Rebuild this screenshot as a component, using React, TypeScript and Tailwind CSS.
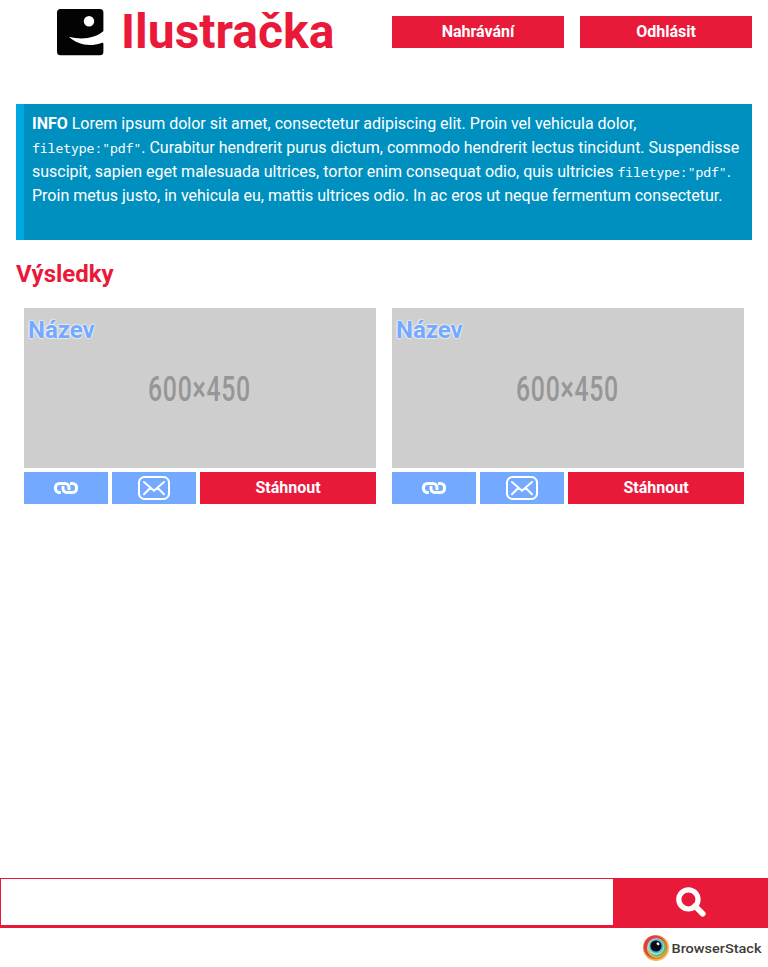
import React from "react";

function Logo() {
  return (
    <svg className="h-12 w-12" viewBox="0 0 48 48">
      <rect x="1" y="1" width="46.4" height="46.2" rx="3.5" fill="#020302" />
      <circle cx="33" cy="13.3" r="5.2" fill="#fff" />
      <path d="M13 28.8 C26 32 39 30.5 48 22.8 V36 C47.6 34.8 46.5 34.6 45 35.2 C33 39 21 36.5 13 28.8Z" fill="#fff" />
    </svg>
  );
}

function LinkIcon() {
  return (
    <svg className="h-3 w-6" viewBox="0 0 24 12" fill="none" stroke="#fff" strokeWidth="3">
      <path d="M6.8 10.5 H5.5 A4 4 0 0 1 1.5 6.5 V5.5 A4 4 0 0 1 5.5 1.5 H11 A4 4 0 0 1 15 5.5 V8" />
      <path d="M16 1.5 H18.5 A4 4 0 0 1 22.5 5.5 V6.5 A4 4 0 0 1 18.5 10.5 H13 A4 4 0 0 1 9 6.5 V4" />
    </svg>
  );
}

function MailIcon() {
  return (
    <svg className="h-6 w-8" viewBox="0 0 32 24" fill="none" stroke="#fff" strokeWidth="2" strokeLinecap="round" strokeLinejoin="round">
      <rect x="1" y="1" width="30" height="22" rx="5.5" />
      <path d="M6 6 L16 14.8 L26 6 M6 18.3 L12.2 12 M26 18.3 L19.8 12" />
    </svg>
  );
}

function SearchIcon() {
  return (
    <svg className="h-[30px] w-[30px]" viewBox="0 0 30 30" fill="none" stroke="#fff">
      <circle cx="12.4" cy="12.4" r="9.6" strokeWidth="5.2" />
      <path d="M19 19 L26.7 26.7" strokeWidth="5.8" strokeLinecap="round" />
    </svg>
  );
}

function BrowserStackMark() {
  return (
    <svg className="h-[26px] w-[26px]" viewBox="0 0 26 26">
      <circle cx="13" cy="13" r="13" fill="#f4b960" />
      <circle cx="12.4" cy="12.2" r="12" fill="#e66f32" />
      <circle cx="11.7" cy="11.6" r="10.8" fill="#e43c41" />
      <circle cx="13.5" cy="13.2" r="9.7" fill="#bdd041" />
      <circle cx="14" cy="12.5" r="9" fill="#6db54c" />
      <circle cx="13" cy="11.6" r="8.3" fill="#aedaea" />
      <circle cx="13.3" cy="11.2" r="7.3" fill="#56b8de" />
      <circle cx="13" cy="11" r="5.6" fill="#080b0c" />
      <ellipse cx="15" cy="8.8" rx="1.6" ry="1.3" fill="#fff" transform="rotate(35 15 8.8)" />
    </svg>
  );
}

function ResultCard() {
  return (
    <article className="flex flex-1 flex-col gap-1">
      <div className="relative h-40 bg-[#cecece]">
        <svg className="block h-40 w-full" viewBox="0 0 352 160">
          <text transform="translate(124 92.7) scale(.71 1)" fontFamily="Roboto, sans-serif" fontSize="35" fontWeight="500" fill="#969696" textLength="144" lengthAdjust="spacing">600×450</text>
        </svg>
        <h3 className="absolute left-1 top-1 text-2xl leading-9 font-bold text-[#73a9ff] [text-shadow:0_0_2px_#fff,0_0_2px_#fff,0_0_1px_#fff]">Název</h3>
      </div>
      <div className="flex h-8 gap-1 font-bold text-white">
        <button className="flex w-21 items-center justify-center bg-[#73a9ff]" aria-label="Odkaz"><LinkIcon /></button>
        <button className="flex w-21 items-center justify-center bg-[#73a9ff]" aria-label="E-mail"><MailIcon /></button>
        <button className="flex-1 bg-[#e9193a]">Stáhnout</button>
      </div>
    </article>
  );
}

function Code() {
  return <code className="font-['Noto_Sans_Mono','DejaVu_Sans_Mono',monospace] text-[13px] leading-none">filetype:"pdf"</code>;
}

export default function App() {
  return (
    <div className="flex h-[967px] w-[768px] flex-col bg-white font-[Roboto,sans-serif] text-base">
      <header className="flex h-16 items-center pr-4">
        <div className="flex w-[392px] items-center gap-[17px] pl-14">
          <Logo />
          <h1 className="text-5xl leading-16 font-bold text-[#e9193a]">Ilustračka</h1>
        </div>
        <nav className="flex flex-1 gap-4 font-bold text-white">
          <button className="h-8 flex-1 bg-[#e9193a]">Nahrávání</button>
          <button className="h-8 flex-1 bg-[#e9193a]">Odhlásit</button>
        </nav>
      </header>
      <main className="flex-1 px-4 pt-10">
        <p className="h-[136px] border-l-8 border-[#00a7e1] bg-[#0090c0] p-2 leading-6 text-white">
          <strong>INFO</strong> Lorem ipsum dolor sit amet, consectetur adipiscing elit. Proin vel vehicula dolor, <Code />. Curabitur hendrerit purus dictum, commodo hendrerit lectus tincidunt. Suspendisse suscipit, sapien eget malesuada ultrices, tortor enim consequat odio, quis ultricies <Code />. Proin metus justo, in vehicula eu, mattis ultrices odio. In ac eros ut neque fermentum consectetur.
        </p>
        <h2 className="mt-4 text-2xl leading-9 font-bold text-[#e9193a]">Výsledky</h2>
        <section className="mt-4 flex gap-4 px-2">
          <ResultCard />
          <ResultCard />
        </section>
      </main>
      <form className="flex h-[50px] border-b-[3px] border-[#e9193a] bg-[#e9193a]">
        <input className="h-[47px] w-[614px] border border-b-0 border-[#e9193a] bg-white px-4 outline-none" aria-label="Hledat" />
        <button className="flex h-[47px] flex-1 items-center justify-center" type="button" aria-label="Hledat"><SearchIcon /></button>
      </form>
      <footer className="flex h-[39px] items-center justify-end gap-[2px] pr-1 text-[#3e3c35]">
        <BrowserStackMark />
        <svg className="h-6 w-[93px]" viewBox="0 0 93 24">
          <text x="0.5" y="16.7" fontFamily="Roboto, sans-serif" fontSize="13.5" fontWeight="500" fill="currentColor" textLength="90" lengthAdjust="spacingAndGlyphs">BrowserStack</text>
        </svg>
      </footer>
    </div>
  );
}
